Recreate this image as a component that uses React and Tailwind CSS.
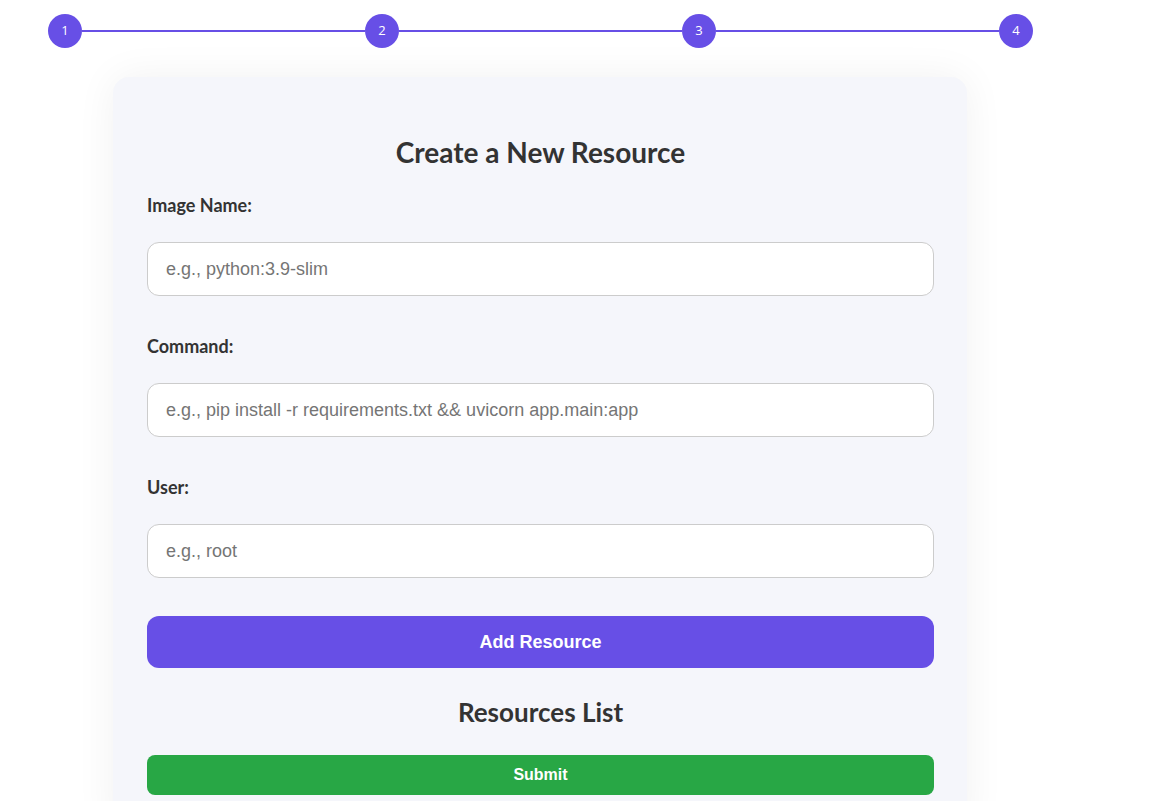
import React from "react";

const steps = [1, 2, 3, 4];

function Field({ label, placeholder, last }) {
  return (
    <div className={last ? "mb-[38px]" : "mb-[40px]"}>
      <label className="block text-[18px] leading-[20px] font-bold text-[#333] mb-[27px] font-['Lato',sans-serif]">
        {label}
      </label>
      <input
        className="block w-full h-[54px] rounded-[12px] border border-[#ccc] bg-white px-[18px] text-[18px] font-['Liberation_Sans',Arial,sans-serif] placeholder:text-[#757575] outline-none"
        placeholder={placeholder}
      />
    </div>
  );
}

export default function App() {
  return (
    <div className="min-h-screen bg-white font-['Lato',sans-serif]">
      {/* Stepper */}
      <div className="pt-[14px] pl-[48px]">
        <div className="flex items-center w-[985px]">
          {steps.map((s, i) => (
            <React.Fragment key={s}>
              <div className="w-[34px] h-[34px] rounded-full bg-[#674fe6] text-white text-[13px] flex items-center justify-center shrink-0 font-['Open_Sans',sans-serif]">
                {s}
              </div>
              {i < steps.length - 1 && <div className="flex-1 h-[2px] bg-[#674fe6]" />}
            </React.Fragment>
          ))}
        </div>
      </div>

      {/* Card */}
      <div className="ml-[113px] mt-[29px] w-[854px] rounded-[16px] bg-[#f5f6fb] pl-[34px] pr-[33px] pt-[59px] pb-[40px] shadow-[0_0_40px_rgba(0,0,0,0.06)]">
        <h2 className="text-center text-[28px] leading-[32px] font-bold text-[#333] mb-[27px]">
          Create a New Resource
        </h2>
        <Field label="Image Name:" placeholder="e.g., python:3.9-slim" />
        <Field
          label="Command:"
          placeholder="e.g., pip install -r requirements.txt && uvicorn app.main:app"
        />
        <Field label="User:" placeholder="e.g., root" last />
        <button className="block w-full h-[52px] rounded-[12px] bg-[#674fe6] text-white text-[18px] font-bold font-['Liberation_Sans',Arial,sans-serif]">
          Add Resource
        </button>
        <h3 className="text-center text-[26px] leading-[30px] font-bold text-[#333] mt-[29px] mb-[28px]">
          Resources List
        </h3>
        <button className="block w-full h-[40px] rounded-[8px] bg-[#28a745] text-white text-[16px] font-bold font-['Liberation_Sans',Arial,sans-serif]">
          Submit
        </button>
      </div>
    </div>
  );
}
